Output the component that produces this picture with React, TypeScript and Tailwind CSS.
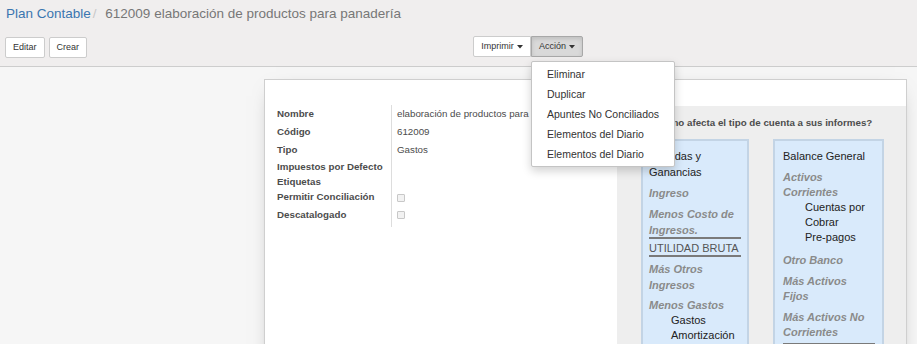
import React from 'react';

const Caret: React.FC = () => (
  <svg width="6" height="4" viewBox="0 0 6 4" className="ml-[3px] inline-block">
    <path d="M0 0 L6 0 L3 3.5 Z" fill="#333" />
  </svg>
);

const labels: { label: string; value?: string; check?: boolean; h: string }[] = [
  { label: 'Nombre', value: 'elaboración de productos para panadería', h: 'h-[18px]' },
  { label: 'Código', value: '612009', h: 'h-[18px]' },
  { label: 'Tipo', value: 'Gastos', h: 'h-[18px]' },
  { label: 'Impuestos por Defecto', h: 'h-[17px]' },
  { label: 'Etiquetas', h: 'h-[13px]' },
  { label: 'Permitir Conciliación', check: true, h: 'h-[17px]' },
  { label: 'Descatalogado', check: true, h: 'h-[18px]' },
];

const menu = ['Eliminar', 'Duplicar', 'Apuntes No Conciliados', 'Elementos del Diario', 'Elementos del Diario'];

export default function App() {
  return (
    <div className="w-[917px] h-[344px] overflow-hidden bg-[#f6f6f6] font-['Liberation_Sans',Arial,sans-serif]">
      {/* control panel */}
      <div className="h-[67px] bg-[#f0eeee] border-b border-[#cdcdcd] px-[6px]">
        <div className="pt-[5px] text-[13.5px] leading-[18px] whitespace-nowrap">
          <span className="text-[#3a76b0]">Plan Contable</span>
          <span className="text-[#c8c8c8] pl-[2px] pr-[5px]">/</span>
          <span className="text-[#777]"> 612009 elaboración de productos para panadería</span>
        </div>
        <div className="flex items-start mt-[13px]">
          <div className="flex gap-[4px] mt-[1px] -ml-px w-[468px]">
            <button className="h-[21px] px-[7px] bg-white border border-[#ccc] rounded-[2px] text-[9px] text-[#333]">Editar</button>
            <button className="h-[21px] px-[7px] bg-white border border-[#ccc] rounded-[2px] text-[9px] text-[#333]">Crear</button>
          </div>
          <div className="flex">
            <button className="h-[21px] w-[58px] flex items-center justify-center bg-white border border-[#ccc] rounded-l-[2px] text-[9px] text-[#333]">
              Imprimir<Caret />
            </button>
            <div className="relative">
              <button className="h-[21px] w-[52px] flex items-center justify-center bg-[#d9d9d9] border border-[#a8a8a8] rounded-r-[2px] shadow-[inset_0_2px_4px_rgba(0,0,0,0.12)] text-[9px] text-[#333]">
                Acción<Caret />
              </button>
              <div className="absolute left-0 top-[25px] w-[144px] bg-white border border-[#c4c4c4] rounded-[2px] shadow-[0_4px_10px_rgba(0,0,0,0.18)] py-[2px] z-10">
                {menu.map((m, i) => (
                  <div key={i} className="h-[20px] leading-[20px] pl-[15px] text-[10.5px] text-[#333] whitespace-nowrap">
                    {m}
                  </div>
                ))}
              </div>
            </div>
          </div>
        </div>
      </div>

      {/* form sheet */}
      <div className="ml-[264px] mt-[12px] w-[643px] h-[400px] bg-white border border-[#cfcfcf] shadow-[0_5px_20px_-12px_rgba(0,0,0,0.5)] flex">
        <div className="w-[352px] pt-[25px] pl-[12px]">
          <div className="grid grid-cols-[114px_1fr] text-[9.75px] text-[#4c4c4c]">
            {labels.map((r, i) => (
              <React.Fragment key={i}>
                <div className={`${r.h} flex items-center font-bold whitespace-nowrap`}>{r.label}</div>
                <div className={`${r.h} flex items-center border-l border-[#ddd] pl-[5px] whitespace-nowrap overflow-hidden`}>
                  {r.value}
                  {r.check && <span className="w-[8px] h-[8px] border border-[#c8c8c8] bg-[#f2f2f2] rounded-[1px]" />}
                </div>
              </React.Fragment>
            ))}
            <div className="h-[3px]" />
            <div className="h-[3px] border-l border-[#ddd]" />
          </div>
        </div>

        <div className="w-[289px] mt-[26px] bg-[#eeeeee]">
          <div className="pt-[11px] text-center text-[9.75px] leading-[12px] font-bold text-[#4c4c4c] whitespace-nowrap">
            ¿Cómo afecta el tipo de cuenta a sus informes?
          </div>
          <div className="flex gap-[24px] mt-[10px] pl-[24px]">
            {/* Pérdidas y Ganancias */}
            <div className="w-[108px] h-[260px] bg-[#d9eafb] border-2 border-[#c3d4e5] pl-[6px] pr-[6px] pt-[7px] text-[11px] whitespace-nowrap">
              <div className="leading-[16px] text-[#222]">Pérdidas y<br />Ganancias</div>
              <div className="mt-[5px] leading-[16px] font-bold italic text-[#8a8a8a]">Ingreso</div>
              <div className="mt-[5px] leading-[16px] font-bold italic text-[#8a8a8a]">Menos Costo de<br />Ingresos.</div>
              <div className="h-[2px] bg-[#7a7a7a] -mt-px" />
              <div className="leading-[14px] mt-[2px] text-[#555]">UTILIDAD BRUTA</div>
              <div className="h-[2px] bg-[#7a7a7a]" />
              <div className="mt-[4px] leading-[16px] font-bold italic text-[#8a8a8a]">Más Otros<br />Ingresos</div>
              <div className="mt-[5px] leading-[15px] font-bold italic text-[#8a8a8a]">Menos Gastos</div>
              <div className="pl-[22px] leading-[15px] text-[#222]">Gastos<br />Amortización</div>
            </div>
            {/* Balance General */}
            <div className="w-[111px] h-[260px] bg-[#d9eafb] border-2 border-[#c3d4e5] pl-[8px] pr-[7px] pt-[7px] text-[11px] whitespace-nowrap">
              <div className="leading-[16px] text-[#222]">Balance General</div>
              <div className="mt-[6px] leading-[15px] font-bold italic text-[#8a8a8a]">Activos<br />Corrientes</div>
              <div className="pl-[22px] leading-[15px] text-[#222]">Cuentas por<br />Cobrar<br />Pre-pagos</div>
              <div className="mt-[7px] leading-[16px] font-bold italic text-[#8a8a8a]">Otro Banco</div>
              <div className="mt-[6px] leading-[15px] font-bold italic text-[#8a8a8a]">Más Activos<br />Fijos</div>
              <div className="mt-[6px] leading-[15px] font-bold italic text-[#8a8a8a]">Más Activos No<br />Corrientes</div>
              <div className="h-[3px] bg-[#7a7a7a] mt-[3px]" />
            </div>
          </div>
        </div>
      </div>
    </div>
  );
}
